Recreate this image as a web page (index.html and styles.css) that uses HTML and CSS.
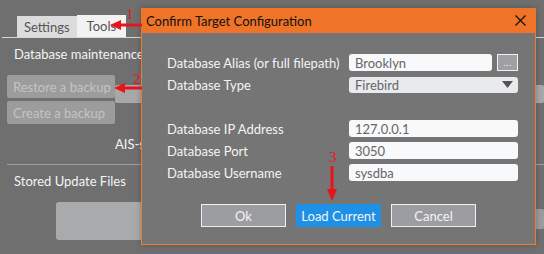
FILE: index.html
```html
<!DOCTYPE html>
<html lang="en">
<head>
    <meta charset="UTF-8">
    <title>Confirm Target Configuration</title>
    <link rel="stylesheet" href="styles.css">
</head>
<body>
    <!-- окно приложения за диалогом -->
    <div class="app">
        <div class="tabs">
            <span class="tab">Settings</span>
            <span class="tab tab-active">Tools</span>
        </div>
        <div class="tab-page">
            <div class="section-title">Database maintenance</div>
            <div class="maint">
                <div class="maint-buttons">
                    <button class="app-button">Restore a backup</button>
                    <button class="app-button">Create a backup</button>
                </div>
                <div class="maint-side">
                    <div class="side-field"></div>
                </div>
            </div>
            <div class="ais-row">
                <span class="ais-label">AIS-s</span>
                <div class="side-field ais-field"></div>
            </div>
            <div class="divider"></div>
            <div class="section-title">Stored Update Files</div>
            <div class="files-row">
                <div class="files-box"></div>
                <button class="app-button side-button">A</button>
            </div>
        </div>
    </div>

    <!-- диалог -->
    <div class="dialog">
        <div class="dialog-title">
            <span>Confirm Target Configuration</span>
            <svg class="close-icon" width="11" height="11" viewBox="0 0 11 11">
                <path d="M0.5 0.5 L10.5 10.5 M10.5 0.5 L0.5 10.5" stroke="#111" stroke-width="1.2"/>
            </svg>
        </div>
        <div class="dialog-body">
            <div class="form-grid">
                <label>Database Alias (or full filepath)</label>
                <div class="input-with-button">
                    <input type="text" class="field" value="Brooklyn">
                    <button class="browse-button">...</button>
                </div>

                <label>Database Type</label>
                <div class="select-box">
                    <span>Firebird</span>
                    <svg width="11" height="7" viewBox="0 0 11 7"><path d="M0 0 H11 L5.5 7 Z" fill="#555"/></svg>
                </div>

                <span class="empty-row"></span>
                <span class="empty-row"></span>

                <label>Database IP Address</label>
                <input type="text" class="field" value="127.0.0.1">

                <label>Database Port</label>
                <input type="text" class="field" value="3050">

                <label>Database Username</label>
                <input type="text" class="field" value="sysdba">
            </div>
            <div class="dialog-buttons">
                <button class="dlg-button">Ok</button>
                <button class="dlg-button dlg-primary">Load Current</button>
                <button class="dlg-button">Cancel</button>
            </div>
        </div>
    </div>

    <!-- красные пометки поверх скриншота -->
    <span class="mark mark-1">1</span>
    <span class="mark mark-2">2</span>
    <span class="mark mark-3">3</span>
    <svg class="arrows" width="544" height="254" viewBox="0 0 544 254">
        <g fill="#e8141a" stroke="#e8141a">
            <line x1="142" y1="25" x2="118" y2="25" stroke-width="3"/>
            <path d="M110 25 L121 20 L121 30 Z" stroke="none"/>
            <line x1="142" y1="88" x2="122" y2="88" stroke-width="3"/>
            <path d="M114 88 L125 83 L125 93 Z" stroke="none"/>
            <line x1="332" y1="166" x2="332" y2="192" stroke-width="3"/>
            <path d="M332 201 L327 189 L337 189 Z" stroke="none"/>
        </g>
    </svg>
</body>
</html>
```

FILE: styles.css
```css
/* общий стиль */
body {
    margin: 0;
    width: 544px;
    height: 254px;
    overflow: hidden;
    position: relative;
    background-color: #6f6f6f;
    font-family: Lato, "Open Sans", sans-serif;
    font-size: 13px;
    color: #f4f4f4;
}

.app {
    padding-top: 15px;
}

.tabs {
    display: flex;
    align-items: flex-end;
    margin-left: 17px;
    height: 22px;
}

.tab {
    background-color: #dcdcdc;
    color: #555;
    height: 21px;
    line-height: 23px;
    padding: 0 7px;
}

.tab-active {
    background-color: #f2f2f2;
    height: 22px;
    line-height: 22px;
    padding: 0 10px;
}

.tab-page {
    border-top: 1px solid #d6d6d6;
    margin-left: 2px;
    padding-left: 5px;
}

.section-title {
    height: 18px;
    line-height: 18px;
    margin: 7px 0 0 7px;
    white-space: nowrap;
}

.maint {
    display: flex;
    margin-top: 12px;
}

.maint-buttons {
    display: flex;
    flex-direction: column;
    gap: 3px;
    width: 108px;
}

.app-button {
    height: 23px;
    border: none;
    border-radius: 2px;
    background-color: #9c9c9c;
    color: #c4c4c4;
    font-family: inherit;
    font-size: 13px;
    text-align: left;
    white-space: nowrap;
    padding: 0 6px;
}

.maint-side {
    flex: 1;
    padding-top: 10px;
}

.side-field {
    height: 18px;
    background-color: #a8a8a8;
    border-radius: 2px;
}

.ais-row {
    display: flex;
    align-items: center;
    margin-top: 11px;
    padding-left: 108px;
    height: 17px;
}

.ais-label {
    white-space: nowrap;
    margin-right: 400px;
}

.ais-field {
    flex: 1;
    height: 15px;
}

.divider {
    border-top: 1px solid #a0a0a0;
    margin-top: 12px;
}

.files-row {
    display: flex;
    align-items: flex-start;
    margin-top: 12px;
    padding-left: 49px;
}

.files-box {
    width: 200px;
    height: 38px;
    background-color: #a9aaab;
    border-radius: 3px;
}

.side-button {
    margin-left: auto;
    margin-top: 7px;
    width: 60px;
    height: 20px;
}

/* диалог */
.dialog {
    position: absolute;
    left: 141px;
    top: 8px;
    width: 393px;
    height: 236px;
    border: 1px solid #f07a30;
    border-top: none;
    background-color: #757575;
    box-shadow: 0 0 6px rgba(0, 0, 0, 0.25);
}

.dialog-title {
    display: flex;
    align-items: center;
    justify-content: space-between;
    height: 25px;
    margin: 0 -1px;
    padding: 0 10px 0 5px;
    background-color: #f07428;
    color: #111;
}

.dialog-body {
    padding: 21px 17px 0 25px;
}

.form-grid {
    display: grid;
    grid-template-columns: 182px 169px;
    grid-auto-rows: 17px;
    row-gap: 5px;
    align-items: center;
}

.form-grid label {
    white-space: nowrap;
}

.field {
    box-sizing: border-box;
    width: 100%;
    height: 17px;
    border: none;
    border-radius: 3px;
    background-color: #f8f9fb;
    color: #666;
    font-family: inherit;
    font-size: 13px;
    padding: 0 6px;
    outline: none;
}

.input-with-button {
    display: flex;
    gap: 5px;
}

.browse-button {
    flex: none;
    width: 21px;
    height: 17px;
    box-sizing: border-box;
    border: 1px solid #f2f2f2;
    background-color: #9fa0a4;
    color: #eee;
    font-size: 10px;
    padding: 0;
    line-height: 12px;
}

.select-box {
    display: flex;
    align-items: center;
    justify-content: space-between;
    height: 16px;
    border-radius: 3px;
    background-color: #e9eaee;
    color: #666;
    padding: 0 5px 0 6px;
}

.dialog-buttons {
    display: flex;
    justify-content: center;
    gap: 10px;
    margin: 23px 0 0 -8px;
}

.dlg-button {
    width: 85px;
    height: 23px;
    border: 1px solid #f0f0f0;
    background-color: #9c9da0;
    color: #f4f4f4;
    font-family: inherit;
    font-size: 13px;
    padding: 0;
}

.dlg-primary {
    background-color: #1e90e6;
    border-color: #1e90e6;
}

/* пометки */
.mark {
    position: absolute;
    color: #e8141a;
    font-family: "Liberation Serif", serif;
    font-size: 15px;
    line-height: 15px;
}

.mark-1 { left: 126px; top: 7px; }
.mark-2 { left: 133px; top: 72px; }
.mark-3 { left: 329px; top: 150px; }

.arrows {
    position: absolute;
    left: 0;
    top: 0;
}
```
